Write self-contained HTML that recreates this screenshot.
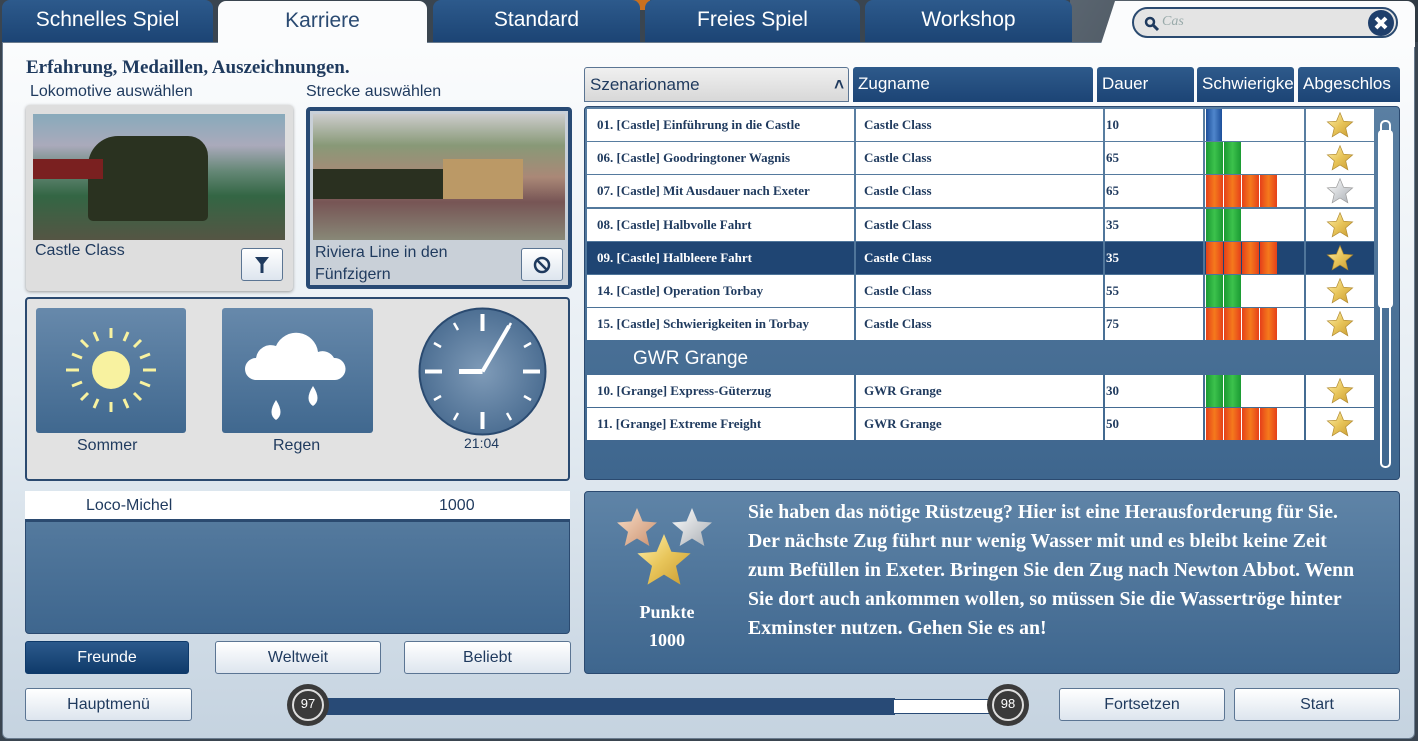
<!DOCTYPE html>
<html><head><meta charset="utf-8"><style>
*{margin:0;padding:0;box-sizing:border-box}
body{width:1418px;height:741px;overflow:hidden;background:#3a4550;position:relative;font-family:"Liberation Sans Narrow","Liberation Sans",sans-serif;color:#1f3a5e}
.a{position:absolute}
.tab{position:absolute;top:0;height:44px;background:linear-gradient(#2d5a8c,#1b4373);color:#fff;font-size:21px;text-align:center;line-height:40px;border-radius:8px 8px 0 0}
.panel{left:2px;top:42px;width:1413px;height:697px;background:linear-gradient(#fbfcfd 0%,#e6edf3 50%,#c5d3e0 100%);border:1px solid #6b7c8e;border-radius:0 0 6px 6px}
.lbl{font-size:16px;color:#1f3a5e}
.btn{position:absolute;height:33px;border:1px solid #5b7593;border-radius:3px;background:linear-gradient(#fff,#dde5ee);font-size:16px;text-align:center;line-height:31px;color:#1f3a5e}
.hd{position:absolute;top:67px;height:35px;background:linear-gradient(#2e5a8b,#1c4475);color:#fff;font-size:17px;line-height:34px;padding-left:5px;border-radius:3px 3px 0 0;white-space:nowrap;overflow:hidden}
.row{position:absolute;left:587px;width:787px;height:32px;font-family:"Liberation Serif",serif;font-weight:bold;font-size:13px}
.row>div{position:absolute;top:0;height:32px;background:#fff;line-height:32px;padding-left:10px;white-space:nowrap}
.row.sel>div{background:#1f4573;color:#fff}
.c1{left:0;width:267px}.c2{left:269px;width:247px;padding-left:8px!important}.c3{left:518px;width:98px;padding-left:1px!important}.c4{left:618px;width:99px;padding-left:1px!important;display:flex;gap:1px}.c5{left:719px;width:68px}
.b{width:17px;height:32px;flex:none}
.o{background:linear-gradient(90deg,#e5401a,#f57a1c 50%,#e5401a)}
.g{background:linear-gradient(90deg,#1a9a33,#3cc24c 50%,#1a9a33)}
.bl{background:linear-gradient(90deg,#1d4f9a,#4f86cc 50%,#1d4f9a);width:16px}
.st{position:absolute;left:20px;top:3px}
</style></head><body>
<div class="a" style="left:1070px;top:0;width:348px;height:42px;background:linear-gradient(120deg,#5a6570,#2d3740)"></div>
<div class="a" style="left:630px;top:0;width:20px;height:10px;background:#c87020"></div>
<div class="tab" style="left:2px;width:211px">Schnelles Spiel</div>
<div class="tab" style="left:433px;width:207px">Standard</div>
<div class="tab" style="left:645px;width:215px">Freies Spiel</div>
<div class="tab" style="left:865px;width:207px">Workshop</div>
<div class="a panel"></div>
<div class="a" style="left:218px;top:1px;width:209px;height:46px;background:#fbfcfd;border-radius:8px 8px 0 0;color:#2a4a72;font-size:21px;text-align:center;line-height:40px">Karriere</div>
<div class="a" style="left:1100px;top:1px;width:315px;height:46px;background:#fbfcfd;border-radius:8px 8px 0 0;clip-path:polygon(15px 0,100% 0,100% 100%,0 100%)"></div>
<div class="a" style="left:1132px;top:7px;width:266px;height:31px;border:2px solid #2a4a70;border-radius:16px;background:#e4e4e4">
 <svg class="a" style="left:10px;top:7px" width="16" height="16" viewBox="0 0 16 16"><circle cx="6" cy="6" r="4" fill="none" stroke="#1f3a5e" stroke-width="2.5"/><path d="M9 9l5 5" stroke="#1f3a5e" stroke-width="3"/></svg>
 <span class="a" style="left:28px;top:5px;font-family:'Liberation Serif',serif;font-style:italic;font-size:14px;color:#9aa">Cas</span>
 <svg class="a" style="left:234px;top:1px" width="26" height="26" viewBox="0 0 26 26"><circle cx="13" cy="13" r="13" fill="#1f3f6b"/><path d="M8 8l10 10M18 8l-10 10" stroke="#fff" stroke-width="4"/></svg>
</div>

<div class="a" style="left:26px;top:57px;font-family:'Liberation Serif',serif;font-weight:bold;font-size:19px;color:#1f3a5e">Erfahrung, Medaillen, Auszeichnungen.</div>
<div class="a lbl" style="left:30px;top:83px">Lokomotive auswählen</div>
<div class="a lbl" style="left:306px;top:83px">Strecke auswählen</div>

<div class="a" style="left:26px;top:105px;width:267px;height:186px;background:#dedede;border-radius:4px;box-shadow:0 1px 3px #999"></div>
<div class="a" style="left:33px;top:114px;width:252px;height:126px;background:linear-gradient(180deg,#8ab 0%,#aab 25%,#687 45%,#364 65%,#554 100%)">
 <div class="a" style="left:55px;top:22px;width:120px;height:85px;background:#2a3220;border-radius:30px 20px 5px 5px"></div>
 <div class="a" style="left:0;top:45px;width:70px;height:20px;background:#7a2020"></div>
</div>
<div class="a" style="left:35px;top:242px;font-size:16px">Castle Class</div>
<div class="btn" style="left:241px;top:248px;width:42px;height:33px"><svg width="14" height="16" viewBox="0 0 14 16" style="margin-top:8px"><path d="M0 0h14L8.5 7v9h-3V7z" fill="#1f3a5e"/></svg></div>

<div class="a" style="left:306px;top:107px;width:266px;height:182px;background:#c9d0d8;border:4px solid #284a74;border-radius:4px"></div>
<div class="a" style="left:313px;top:114px;width:252px;height:126px;background:linear-gradient(180deg,#ccc 0%,#897 25%,#a87 50%,#755 70%,#887 100%)">
 <div class="a" style="left:0;top:55px;width:130px;height:30px;background:#2a3020"></div>
 <div class="a" style="left:130px;top:45px;width:80px;height:40px;background:#b96"></div>
</div>
<div class="a" style="left:315px;top:242px;font-size:16px;line-height:22px">Riviera Line in den<br>Fünfzigern</div>
<div class="btn" style="left:521px;top:248px;width:42px;height:33px"><svg width="18" height="18" viewBox="0 0 18 18" style="margin-top:7px"><circle cx="9" cy="9" r="7" fill="none" stroke="#1f3a5e" stroke-width="2.5"/><path d="M4 4l10 10" stroke="#1f3a5e" stroke-width="2.5"/></svg></div>

<div class="a" style="left:25px;top:297px;width:545px;height:184px;background:#e2e2e2;border:2px solid #2b4a70;border-radius:4px"></div>
<div class="a" style="left:36px;top:308px;width:150px;height:125px;background:linear-gradient(#6789ab,#40688f);border-radius:3px">
 <svg width="150" height="125" viewBox="0 0 150 125"><circle cx="75" cy="62" r="19" fill="#f8f2a0"/><g stroke="#f8f2a0" stroke-width="3"><path d="M75 30v-10M75 94v10M43 62h-13M107 62h13M52 39l-7-7M98 39l7-7M52 85l-7 7M98 85l7 7M62 33l-4-9M88 33l4-9M62 91l-4 9M88 91l4 9M46 50l-10-4M104 50l10-4M46 74l-10 4M104 74l10 4"/></g></svg></div>
<div class="a lbl" style="left:77px;top:437px">Sommer</div>
<div class="a" style="left:222px;top:308px;width:151px;height:125px;background:linear-gradient(#6789ab,#40688f);border-radius:3px">
 <svg width="151" height="125" viewBox="0 0 151 125"><path d="M34 72a11 11 0 0 1 0-22a15 15 0 0 1 20-12a22 22 0 0 1 42 6a13 13 0 0 1 16 6a11 11 0 0 1 1 22z" fill="#fff"/><path d="M54 92q-9 14 0 20q9-6 0-20zM91 78q-9 14 0 20q9-6 0-20z" fill="#fff"/></svg></div>
<div class="a lbl" style="left:273px;top:437px">Regen</div>
<svg class="a" style="left:417px;top:306px" width="131" height="131" viewBox="0 0 131 131"><defs><radialGradient id="cg"><stop offset="0" stop-color="#7f9bb8"/><stop offset="1" stop-color="#4d6f93"/></radialGradient></defs><circle cx="65.5" cy="65.5" r="63" fill="url(#cg)" stroke="#2a4a70" stroke-width="2"/>
<g stroke="#fff" stroke-width="4"><path d="M65.5 8v17M65.5 106v17M8 65.5h17M106 65.5h17"/></g>
<g stroke="#fff" stroke-width="2.5"><path d="M94 17l-4 7M37 17l4 7M114 37l-7 4M17 37l7 4M114 94l-7-4M17 94l7-4M94 114l-4-7M37 114l4-7"/></g>
<path d="M65.5 65.5L92 20" stroke="#fff" stroke-width="4"/><path d="M65.5 65.5H42" stroke="#fff" stroke-width="5"/></svg>
<div class="a" style="left:464px;top:435px;font-size:14px">21:04</div>

<div class="a" style="left:25px;top:491px;width:545px;height:143px;background:linear-gradient(#5a7fa2,#3e668e);border-radius:0 0 4px 4px;border:1px solid #2b4a70"></div>
<div class="a" style="left:25px;top:491px;width:545px;height:31px;background:#fff;border-bottom:3px solid #2b4a70;font-size:16px;line-height:29px"><span class="a" style="left:61px">Loco-Michel</span><span class="a" style="left:414px">1000</span></div>
<div class="btn" style="left:25px;top:641px;width:164px;background:linear-gradient(#2c5a8c,#0f3a6a);color:#fff;border-color:#0f3a6a">Freunde</div>
<div class="btn" style="left:215px;top:641px;width:166px">Weltweit</div>
<div class="btn" style="left:404px;top:641px;width:167px">Beliebt</div>
<div class="btn" style="left:25px;top:688px;width:167px">Hauptmenü</div>
<div class="a" style="left:310px;top:698px;width:585px;height:17px;background:#284a76"></div>
<div class="a" style="left:893px;top:699px;width:100px;height:15px;background:#fff;border:1px solid #284a76"></div>
<div class="a" style="left:287px;top:684px;width:42px;height:42px;border-radius:50%;background:#3a3a3a;color:#fff;font-size:13px;text-align:center;line-height:40px"><div class="a" style="left:5px;top:5px;width:32px;height:32px;border:2px solid #ddd;border-radius:50%"></div>97</div>
<div class="a" style="left:987px;top:684px;width:42px;height:42px;border-radius:50%;background:#3a3a3a;color:#fff;font-size:13px;text-align:center;line-height:40px"><div class="a" style="left:5px;top:5px;width:32px;height:32px;border:2px solid #ddd;border-radius:50%"></div>98</div>
<div class="btn" style="left:1059px;top:688px;width:166px">Fortsetzen</div>
<div class="btn" style="left:1234px;top:688px;width:166px">Start</div>

<div class="hd" style="left:584px;width:265px;background:linear-gradient(#f0f0f0,#d8d8d8);color:#1f3a5e;border:1px solid #5b7593">Szenarioname<span class="a" style="right:4px;top:0;font-weight:bold">&#x2C4;</span></div>
<div class="hd" style="left:853px;width:240px">Zugname</div>
<div class="hd" style="left:1097px;width:97px">Dauer</div>
<div class="hd" style="left:1197px;width:97px">Schwierigke</div>
<div class="hd" style="left:1298px;width:102px">Abgeschlos</div>
<div class="a" style="left:584px;top:106px;width:816px;height:374px;background:linear-gradient(#5a7fa2,#3e668e);border-radius:4px;border:1px solid #2b4a70"></div>
<div class="a" style="left:1380px;top:120px;width:11px;height:348px;border:2px solid #fff;border-radius:5px"></div>
<div class="a" style="left:1378px;top:130px;width:15px;height:178px;background:#fff;border-radius:4px"></div>

<svg width="0" height="0" style="position:absolute"><defs>
<linearGradient id="gs" x1="0" y1="0" x2="1" y2="1"><stop offset="0" stop-color="#fff2b0"/><stop offset=".5" stop-color="#e8c55a"/><stop offset="1" stop-color="#c89a30"/></linearGradient>
<linearGradient id="ss" x1="0" y1="0" x2="1" y2="1"><stop offset="0" stop-color="#fff"/><stop offset="1" stop-color="#a8adb3"/></linearGradient>
<linearGradient id="bs" x1="0" y1="0" x2="1" y2="1"><stop offset="0" stop-color="#fbe0c8"/><stop offset="1" stop-color="#c99070"/></linearGradient>
<polygon id="star" points="0,-1 .265,-.364 .951,-.309 .428,.139 .588,.809 0,.45 -.588,.809 -.428,.139 -.951,-.309 -.265,-.364"/>
</defs></svg>

<div class="row" style="top:109px"><div class="c1">01. [Castle] Einführung in die Castle</div><div class="c2">Castle Class</div><div class="c3">10</div><div class="c4"><span class="b bl"></span></div><div class="c5"><svg class="st" width="28" height="28" viewBox="-1.05 -1.05 2.1 2.1"><use href="#star" fill="url(#gs)" stroke="#b08a30" stroke-width=".05"/></svg></div></div>
<div class="row" style="top:142px"><div class="c1">06. [Castle] Goodringtoner Wagnis</div><div class="c2">Castle Class</div><div class="c3">65</div><div class="c4"><span class="b g"></span><span class="b g"></span></div><div class="c5"><svg class="st" width="28" height="28" viewBox="-1.05 -1.05 2.1 2.1"><use href="#star" fill="url(#gs)" stroke="#b08a30" stroke-width=".05"/></svg></div></div>
<div class="row" style="top:175px"><div class="c1">07. [Castle] Mit Ausdauer nach Exeter</div><div class="c2">Castle Class</div><div class="c3">65</div><div class="c4"><span class="b o"></span><span class="b o"></span><span class="b o"></span><span class="b o"></span></div><div class="c5"><svg class="st" width="28" height="28" viewBox="-1.05 -1.05 2.1 2.1"><use href="#star" fill="url(#ss)" stroke="#999" stroke-width=".05"/></svg></div></div>
<div class="row" style="top:209px"><div class="c1">08. [Castle] Halbvolle Fahrt</div><div class="c2">Castle Class</div><div class="c3">35</div><div class="c4"><span class="b g"></span><span class="b g"></span></div><div class="c5"><svg class="st" width="28" height="28" viewBox="-1.05 -1.05 2.1 2.1"><use href="#star" fill="url(#gs)" stroke="#b08a30" stroke-width=".05"/></svg></div></div>
<div class="row sel" style="top:242px"><div class="c1">09. [Castle] Halbleere Fahrt</div><div class="c2">Castle Class</div><div class="c3">35</div><div class="c4"><span class="b o"></span><span class="b o"></span><span class="b o"></span><span class="b o"></span></div><div class="c5"><svg class="st" width="28" height="28" viewBox="-1.05 -1.05 2.1 2.1"><use href="#star" fill="url(#gs)" stroke="#b08a30" stroke-width=".05"/></svg></div></div>
<div class="row" style="top:275px"><div class="c1">14. [Castle] Operation Torbay</div><div class="c2">Castle Class</div><div class="c3">55</div><div class="c4"><span class="b g"></span><span class="b g"></span></div><div class="c5"><svg class="st" width="28" height="28" viewBox="-1.05 -1.05 2.1 2.1"><use href="#star" fill="url(#gs)" stroke="#b08a30" stroke-width=".05"/></svg></div></div>
<div class="row" style="top:308px"><div class="c1">15. [Castle] Schwierigkeiten in Torbay</div><div class="c2">Castle Class</div><div class="c3">75</div><div class="c4"><span class="b o"></span><span class="b o"></span><span class="b o"></span><span class="b o"></span></div><div class="c5"><svg class="st" width="28" height="28" viewBox="-1.05 -1.05 2.1 2.1"><use href="#star" fill="url(#gs)" stroke="#b08a30" stroke-width=".05"/></svg></div></div>
<div class="a" style="left:633px;top:348px;color:#fff;font-size:19px">GWR Grange</div>
<div class="row" style="top:375px"><div class="c1">10. [Grange] Express-Güterzug</div><div class="c2">GWR Grange</div><div class="c3">30</div><div class="c4"><span class="b g"></span><span class="b g"></span></div><div class="c5"><svg class="st" width="28" height="28" viewBox="-1.05 -1.05 2.1 2.1"><use href="#star" fill="url(#gs)" stroke="#b08a30" stroke-width=".05"/></svg></div></div>
<div class="row" style="top:408px"><div class="c1">11. [Grange] Extreme Freight</div><div class="c2">GWR Grange</div><div class="c3">50</div><div class="c4"><span class="b o"></span><span class="b o"></span><span class="b o"></span><span class="b o"></span></div><div class="c5"><svg class="st" width="28" height="28" viewBox="-1.05 -1.05 2.1 2.1"><use href="#star" fill="url(#gs)" stroke="#b08a30" stroke-width=".05"/></svg></div></div>

<div class="a" style="left:584px;top:491px;width:816px;height:183px;background:linear-gradient(#5f84a7,#3e668e);border-radius:4px;border:1px solid #2b4a70"></div>
<svg class="a" style="left:612px;top:505px" width="110" height="85" viewBox="0 0 110 85">
<use href="#star" fill="url(#bs)" transform="translate(25,24) scale(21)"/>
<use href="#star" fill="url(#ss)" transform="translate(80,24) scale(21)"/>
<use href="#star" fill="url(#gs)" transform="translate(52,57) scale(28)"/></svg>
<div class="a" style="left:584px;top:598px;width:166px;text-align:center;color:#fff;font-family:'Liberation Serif',serif;font-weight:bold;font-size:18px;line-height:28px">Punkte<br>1000</div>
<div class="a" style="left:748px;top:498px;color:#fff;font-family:'Liberation Serif',serif;font-weight:bold;font-size:19.8px;line-height:29px;white-space:nowrap">Sie haben das nötige Rüstzeug? Hier ist eine Herausforderung für Sie.<br>Der nächste Zug führt nur wenig Wasser mit und es bleibt keine Zeit<br>zum Befüllen in Exeter. Bringen Sie den Zug nach Newton Abbot. Wenn<br>Sie dort auch ankommen wollen, so müssen Sie die Wassertröge hinter<br>Exminster nutzen. Gehen Sie es an!</div>
</body></html>
